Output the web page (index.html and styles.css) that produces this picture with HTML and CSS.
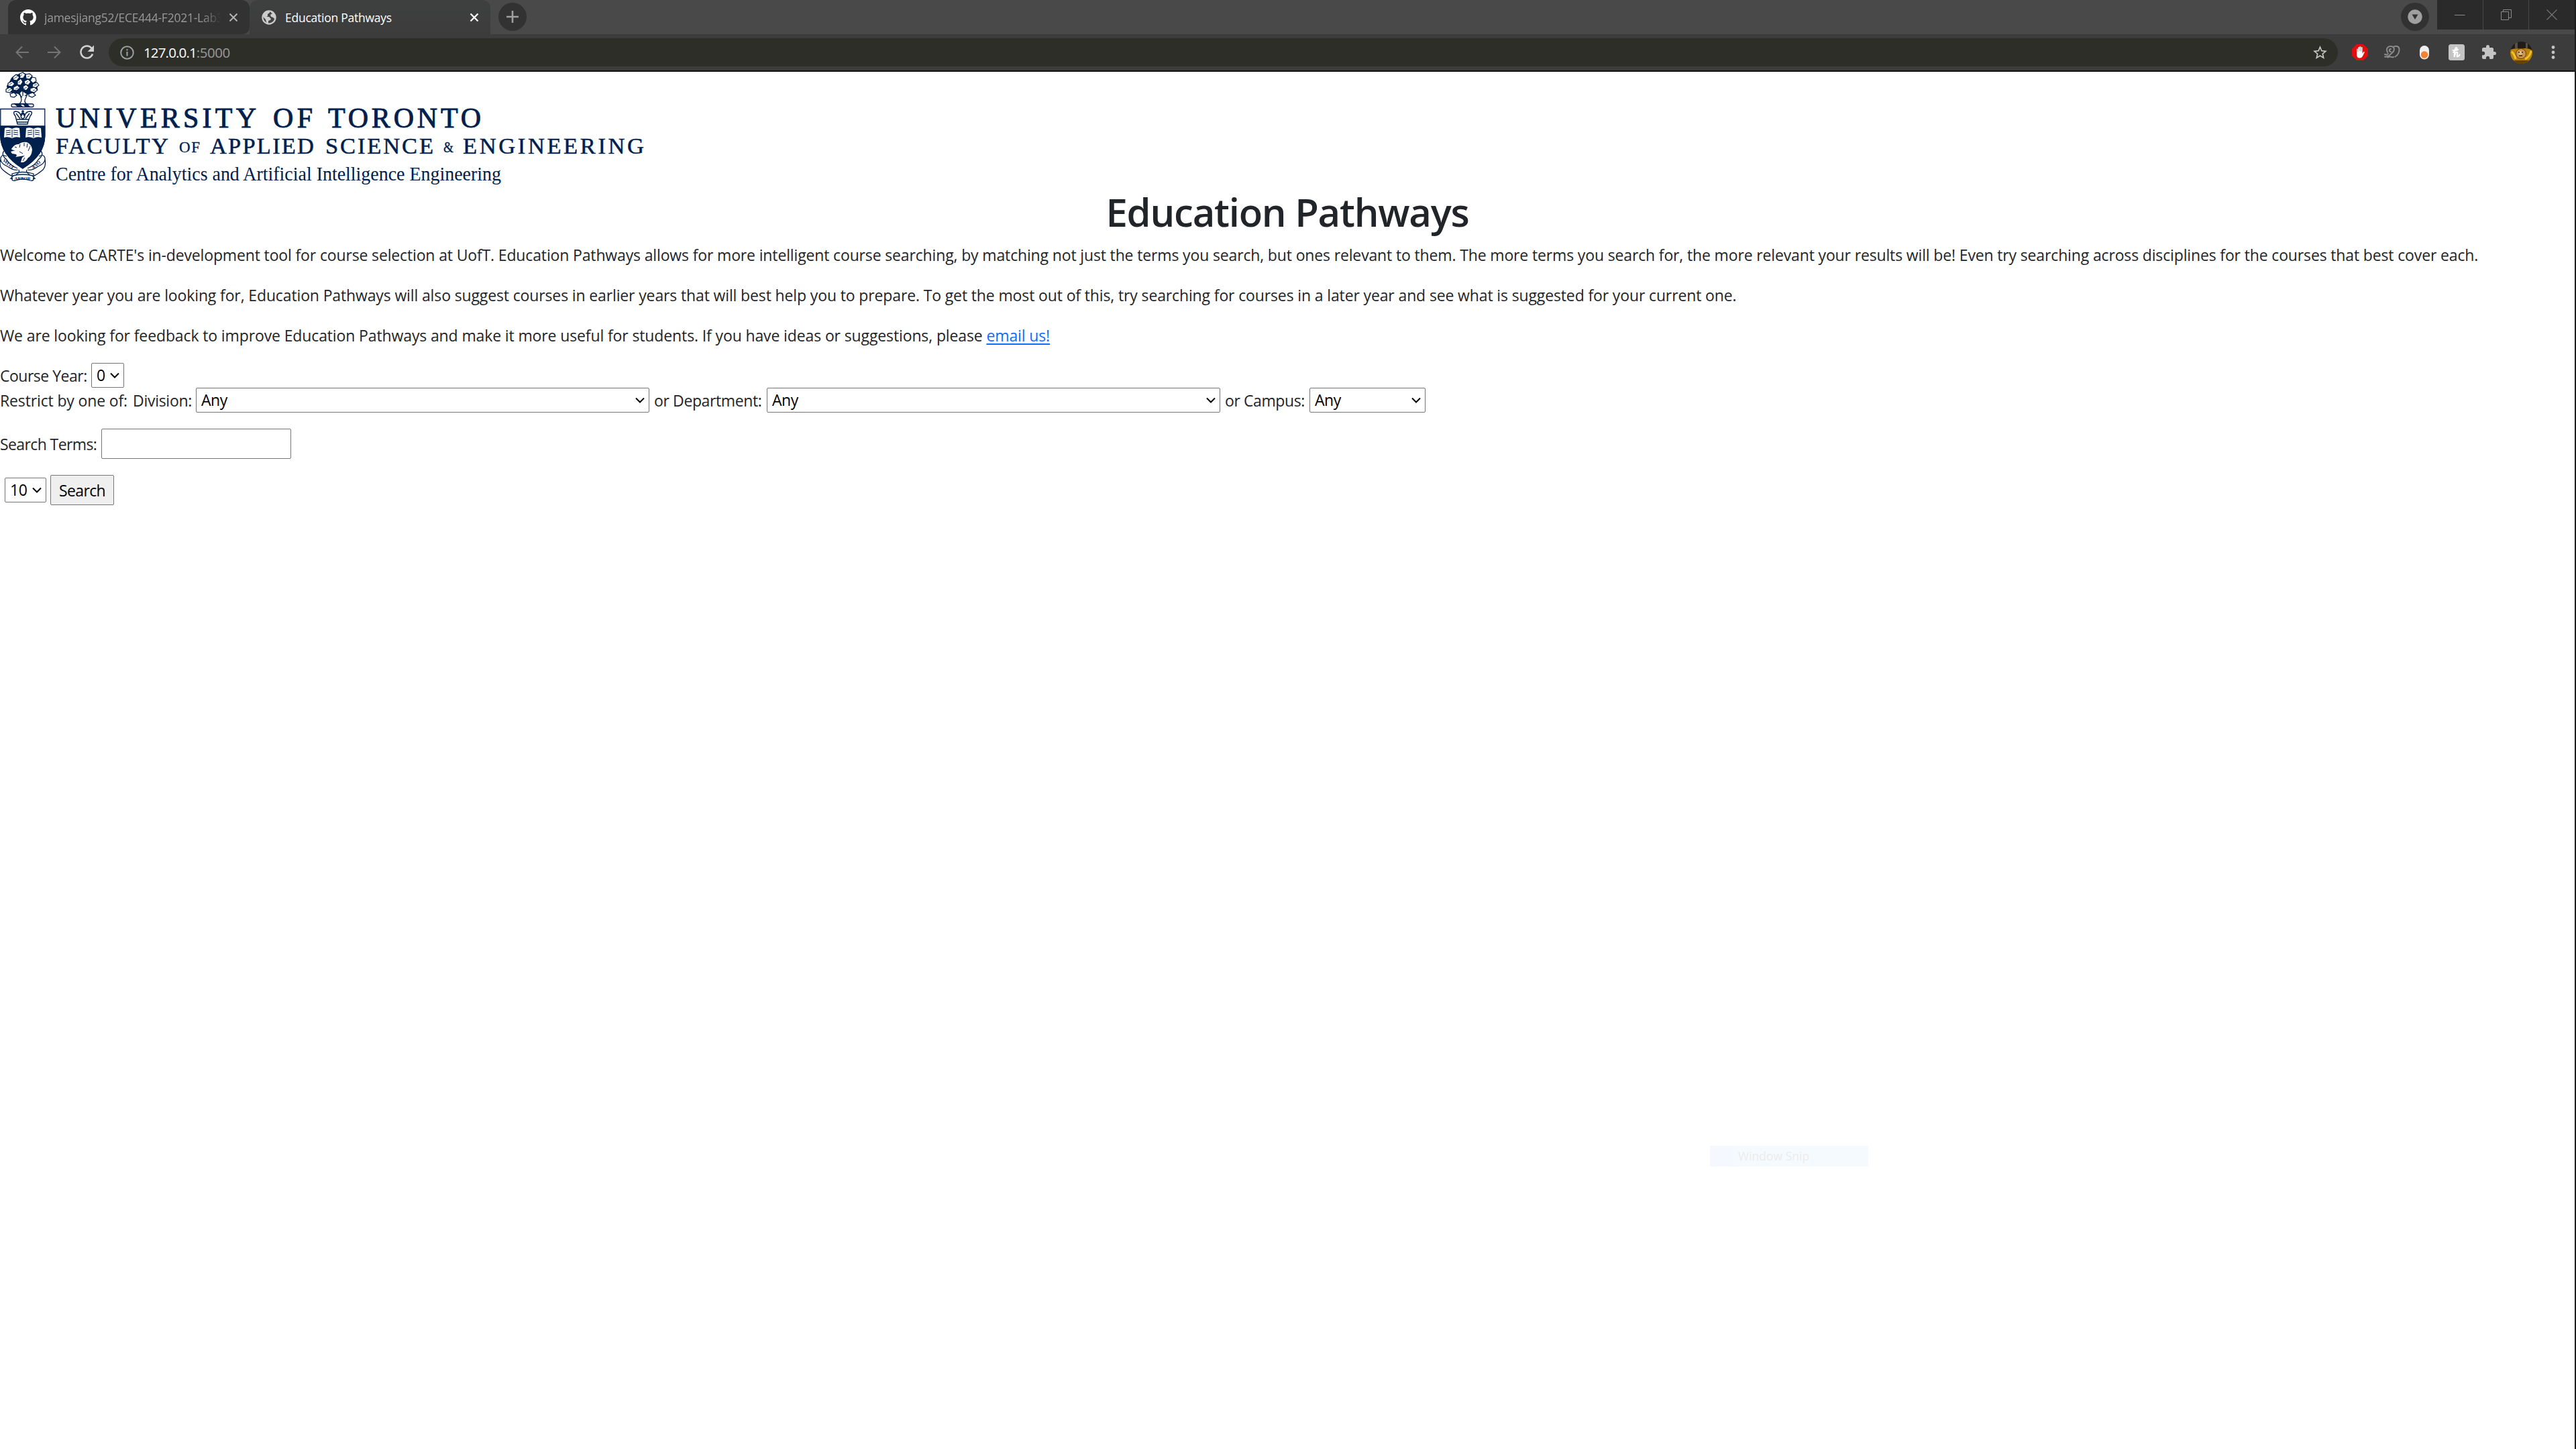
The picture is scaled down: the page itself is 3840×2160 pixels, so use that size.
FILE: index.html
```html
<!DOCTYPE html>
<html lang="en">
<head>
<meta charset="utf-8">
<title>Education Pathways</title>
<link rel="stylesheet" href="styles.css">
</head>
<body>
<div class="window">
  <header class="tabstrip">
    <div class="tab tab-idle">
      <svg class="ic-github" viewBox="0 0 16 16"><path fill="#fff" d="M8 0C3.58 0 0 3.58 0 8c0 3.54 2.29 6.53 5.47 7.59.4.07.55-.17.55-.38 0-.19-.01-.82-.01-1.49-2.01.37-2.53-.49-2.69-.94-.09-.23-.48-.94-.82-1.13-.28-.15-.68-.52-.01-.53.63-.01 1.08.58 1.23.82.72 1.21 1.87.87 2.33.66.07-.52.28-.87.51-1.07-1.78-.2-3.64-.89-3.64-3.95 0-.87.31-1.59.82-2.15-.08-.2-.36-1.02.08-2.12 0 0 .67-.21 2.2.82.64-.18 1.32-.27 2-.27s1.36.09 2 .27c1.53-1.04 2.2-.82 2.2-.82.44 1.1.16 1.92.08 2.12.51.56.82 1.27.82 2.15 0 3.07-1.87 3.75-3.65 3.95.29.25.54.73.54 1.48 0 1.07-.01 1.93-.01 2.2 0 .21.15.46.55.38A8.01 8.01 0 0 0 16 8c0-4.42-3.58-8-8-8z"/></svg>
      <span class="tab-title idle-title">jamesjiang52/ECE444-F2021-Lab3</span>
      <svg class="ic-close" viewBox="0 0 14 14"><path d="M1.5 1.5l11 11M12.5 1.5l-11 11" stroke="#b4b4b4" stroke-width="2"/></svg>
    </div>
    <div class="tab tab-active">
      <svg class="ic-globe" viewBox="0 0 22 22"><circle cx="11" cy="11" r="9.6" fill="#444" stroke="#ccc" stroke-width="2.2"/><path fill="#ccc" d="M2 9L4 4l5-3h3v3l-3 2v3l-2 1h4l3 3-1 2-3 1v4h-1L7 18l-1-4-3-3zM13 1l4 2 4 5v4l-2 1-2-2-3-1-1-3 3-2-2-1z"/></svg>
      <span class="tab-title active-title">Education Pathways</span>
      <svg class="ic-close" viewBox="0 0 14 14"><path d="M1.5 1.5l11 11M12.5 1.5l-11 11" stroke="#fff" stroke-width="2.3"/></svg>
    </div>
    <div class="round-btn newtab"><svg width="18" height="18" viewBox="0 0 18 18"><path d="M9 0v18M0 9h18" stroke="#a0a0a0" stroke-width="2.6"/></svg></div>
    <div class="spacer"></div>
    <div class="round-btn tabsearch"><svg width="22" height="22" viewBox="0 0 22 22"><circle cx="11" cy="11" r="10.7" fill="#a0a0a0"/><path d="M6.5 7.5h9L11 15z" fill="#323232"/></svg></div>
    <div class="winbtns">
      <div class="winbtn"><svg width="16" height="16" viewBox="0 0 16 16"><path d="M0 8.5h15.5" stroke="#8a8a8a"/></svg></div>
      <div class="winbtn"><svg width="16" height="16" viewBox="0 0 16 16"><path d="M.5 3.5h11v12H.5zM3.5 3V.5h12v12H12" fill="none" stroke="#8a8a8a"/></svg></div>
      <div class="winbtn"><svg width="16" height="16" viewBox="0 0 16 16"><path d="M.5.5l15 15M15.5.5l-15 15" stroke="#777" stroke-width="1.1"/></svg></div>
    </div>
  </header>

  <nav class="toolbar">
    <svg class="nav-ic" viewBox="0 0 20 20"><path d="M20 10H2M10 1.5L1.5 10l8.500 8.500" fill="none" stroke="#747474" stroke-width="2"/></svg>
    <svg class="nav-ic" viewBox="0 0 20 20"><path d="M0 10h18M10 1.500L18.500 10 10 18.500" fill="none" stroke="#747474" stroke-width="2"/></svg>
    <svg class="nav-ic reload" viewBox="0 0 22 22"><path d="M17.600 5A9 9 0 1 0 19 13.500" fill="none" stroke="#d0d0d0" stroke-width="2.500"/><path d="M21 .5v9.500h-9.500z" fill="#d0d0d0"/></svg>
    <div class="omnibox">
      <svg class="ic-info" viewBox="0 0 21 21"><circle cx="10.500" cy="10.500" r="9.300" fill="none" stroke="#9aa0a6" stroke-width="2"/><path d="M10.500 9v6.500M10.500 5.300v2.200" stroke="#9aa0a6" stroke-width="2.100"/></svg>
      <span class="url"><span class="host">127.0.0.1</span><span class="port">:5000</span></span>
      <svg class="ic-star" viewBox="0 0 24 24"><path fill="#c8c8c8" d="M22 9.240l-7.190-.62L12 2 9.190 8.630 2 9.240l5.460 4.730L5.820 21 12 17.270 18.180 21l-1.630-7.030L22 9.240zM12 15.400l-3.760 2.270 1-4.280-3.320-2.880 4.380-.38L12 6.100l1.710 4.040 4.380.38-3.320 2.880 1 4.280L12 15.400z"/></svg>
    </div>
    <div class="extensions">
      <svg viewBox="0 0 24 24"><path d="M7 0h10l7 7v10l-7 7H7l-7-7V7z" fill="#e40d0d"/><path d="M7 12V7.200q.9-1.200 1.700 0V11h.5V4.600q.9-1.200 1.800 0V10.500h.4V3.600q1-1.200 1.900 0v6.900h.5V4.700q.9-1.200 1.700 0v9l1.800-2.600q1.300-.6 1.700.5L16.300 17q-1.500 3.500-4.600 3.500Q7 20.500 7 15z" fill="#fff"/></svg>
      <svg viewBox="0 0 24 24" fill="none" stroke="#8b8b8b" stroke-width="2" stroke-linecap="round"><path d="M5 12C2 6 6 2.500 10 3c5 0 6 5 3.500 8C11 14 7 16 5 20c4-4 6 .5 9-1M1 15q3 1.500 5-1M1 18.500q2 1 4-1M13.500 4.500c3-3 9-2 9 3.500 0 5-2 8-6 10.500M10 7c-3 0-3 4 0 4"/></svg>
      <svg viewBox="0 0 24 24"><rect x="5" y="2" width="14" height="20.500" rx="7" fill="#efefef"/><circle cx="12" cy="15.500" r="5.200" fill="#f58233"/></svg>
      <svg viewBox="0 0 24 24"><rect width="24" height="24" rx="3.500" fill="#c4c4c4"/><path d="M7 12C12 9 14 5 11 5c-2 0-2 8-2.500 14 1-5 3-8 4.500-7 1.500 1-2 7 .5 6.500 1.500-.3 2.500-2 3-3M6.500 9q3 1 7.500-1" fill="none" stroke="#fff" stroke-width="2" stroke-linecap="round"/></svg>
      <svg viewBox="0 0 24 24"><path fill="#c4c4c4" d="M20.500 11H19V7c0-1.100-.9-2-2-2h-4V3.500a2.500 2.500 0 0 0-5 0V5H4c-1.100 0-2 .9-2 2v3.800h1.500a2.700 2.700 0 0 1 0 5.400H2V20c0 1.100.9 2 2 2h3.800v-1.500a2.700 2.700 0 0 1 5.400 0V22H17c1.100 0 2-.9 2-2v-4h1.500a2.500 2.500 0 0 0 0-5z"/></svg>
      <svg class="avatar" viewBox="0 0 33 33"><defs><clipPath id="av"><circle cx="16.500" cy="16.500" r="16.500"/></clipPath></defs><g clip-path="url(#av)"><path fill="#201d19" d="M0 0h33v33H0z"/><path fill="#55524a" d="M7 0h4v10H7zM23 2h3v8h-3z"/><path fill="#b98209" d="M0 12q8-3 16-1 9-3 17 2v20H0z"/><path d="M2 15q4 3 6 11M31 14q-2 9-9 12" fill="none" stroke="#edc32d" stroke-width="3"/><path fill="#654008" d="M5 28h23l-6 5H11z"/><circle cx="16" cy="18" r="7.500" fill="#c99450" stroke="#70430d"/><circle cx="15" cy="17" r="3" fill="#e3bd80"/><path d="M12 16h2M17 16h2M13 21h5" stroke="#432408" stroke-width="1.500"/></g></svg>
      <svg viewBox="0 0 24 24" fill="#c4c4c4"><circle cx="12" cy="4.500" r="2.400"/><circle cx="12" cy="12" r="2.400"/><circle cx="12" cy="19.500" r="2.400"/></svg>
    </div>
  </nav>

  <main class="page">
    <svg class="logo" viewBox="0 0 970 174" width="970" height="174">
      <g fill="none" stroke="#00204e" stroke-width="1.300">
        <path d="M28 27l4 14q0 5-4 7h12q-5-3-2-8l6-14M33 38l-9-9M34 36V20M37 36l12-8"/>
        <path d="M17 9l8-5 9-2 10 2 7 6 4 8 1 8-5 6-10 2-8-5-5 4-10-1-7-4-1-7 4-6z" fill="#00204e" stroke="none"/>
        <g fill="#fff" stroke-width="1.200">
          <path d="M29 3l5-2 4 3-3 5-5 1zM38 4l6-1 4 3-4 5-5-1zM19 8l5-4 5 4-4 5-5-1zM48 8l5 1 1 5-5 3-4-4zM12 17l6-3 4 4-4 4-6-1zM26 14l5-4 3 5-3 5-5-1zM36 14l6-3 4 4-4 5-5-2zM49 18l6-2 3 4-5 4-5-2zM9 26l6-3 4 4-4 4-6-1zM20 23l6-3 4 4-5 4-5-1zM34 22l5-3 4 4-4 5-4-2zM45 25l6-2 5 4-5 4-6-2zM15 33l6-2 4 4-4 3-5-1zM43 33l6-2 4 4-5 3-5-2z"/>
        </g>
        <path d="M21 10l5-3M30 7l3-3M41 8l3-2M28 17l2-3M39 17l3-3M14 19l4-2M12 28l4-2M23 26l4-2M36 25l4-2M49 28l3-1M51 20l4-1" stroke-width=".8"/>
        <rect x="17" y="48" width="33" height="4.500" rx="2"/>
        <path d="M22 48l5 4h6l-4-4zM35 48l3 4h6l-4-4z" fill="#00204e"/>
        <path d="M1 131q-3 9 3 15 8 7 15 10l-3 3h3M67 131q2 9-3 15-8 7-15 10l3 3h-3M10 126q-8-4-9 3t10 12q10 7 16 5M58 126q8-4 9 3t-10 12q-10 7-16 5M6 118q-5 6 4 13 4 8 16 13M61 118q5 6-4 13-4 8-16 13M18 152q15-5 32 0v9q-2 2-5 1-11-4-22 0-4 1-5-1zM19 155q15-4 30 0M28 146q2 4-4 7M40 146q-2 4 4 7" fill="#fff"/>
        <path d="M.8 55.500h66V95c0 22-15 38-33 49C16 133 .8 117 .8 95z" fill="#fff"/>
        <path d="M.8 81h66V95c0 22-15 38-33 49C16 133 .8 117 .8 95z" fill="#00204e"/>
        <path d="M23 66q-5-6 0-7 6 0 8 6 1-4 3-4t3 4q2-6 8-6 5 1 0 7l-3 8-1 4H26l-1-4zM25 71h18M26 75h16M34 57v5M32 59h4M24 62l6 8M44 62l-6 8M31 67l3-5 3 5-3 4z" stroke-width="1.400"/>
      </g>
      <g fill="#fff"><path d="M7 84q6-2 11 1 5-3 11-1l1 14q-7-2-12 1-6-3-12-1zM39 84q6-2 11 1 5-3 11-1l1 14q-7-2-12 1-6-3-12-1z"/><path d="M17 115q5-8 11-7 5-4 12-3 7 3 8 11-1 10-6 12-4 8-11 7l2-7 4-3-7 1-7 1q3-2 1-4l-6-1-2-3 7-2q-5 0-6-2z"/></g>
      <g fill="none" stroke="#00204e" stroke-width="1"><path d="M18 86v12M9 88l7-1M9 91l7-1M9 94l7-1M20 87l7 1M20 90l7 1M20 93l7 1M50 86v12M41 88l7-1M41 91l7-1M41 94l7-1M52 87l7 1M52 90l7 1M52 93l7 1M22 112l3 1M30 108l-1 5M36 106v5M41 107l-1 6M45 111l-3 7M29 119l5 3M37 128l-3 5"/></g>
      <g class="motto"><text x="21.500" y="160.500" textLength="24" lengthAdjust="spacingAndGlyphs">ARBOR</text><text transform="translate(3.500 133) rotate(38)" textLength="20">VELUT</text><text transform="translate(49 146) rotate(-40)" textLength="16">ÆVO</text></g>
      <g class="logo-text">
        <text class="l1" x="83" y="83" textLength="299">UNIVERSITY</text><text class="l1" x="407" y="83" textLength="59">OF</text><text class="l1" x="489" y="83" textLength="228">TORONTO</text>
        <text class="l2" x="83" y="122.300" textLength="168">FACULTY</text><text class="l3" x="267" y="120" textLength="31">OF</text><text class="l2" x="313" y="122.300" textLength="155">APPLIED</text><text class="l2" x="485" y="122.300" textLength="161">SCIENCE</text><text class="l3" x="661" y="120" textLength="15" lengthAdjust="spacingAndGlyphs">&amp;</text><text class="l2" x="690" y="122.300" textLength="270">ENGINEERING</text>
        <text class="l4" x="83" y="162" textLength="664" lengthAdjust="spacingAndGlyphs">Centre for Analytics and Artificial Intelligence Engineering</text>
      </g>
    </svg>
    <h1 class="title"><span>Education Pathways</span></h1>
    <p class="copy c1">Welcome to CARTE's in-development tool for course selection at UofT. Education Pathways allows for more intelligent course searching, by matching not just the terms you search, but ones relevant to them. The more terms you search for, the more relevant your results will be! Even try searching across disciplines for the courses that best cover each.</p>
    <p class="copy c2">Whatever year you are looking for, Education Pathways will also suggest courses in earlier years that will best help you to prepare. To get the most out of this, try searching for courses in a later year and see what is suggested for your current one.</p>
    <p class="copy c3">We are looking for feedback to improve Education Pathways and make it more useful for students. If you have ideas or suggestions, please <a class="mail" href="#">email us!</a></p>
    <form class="form">
      <div class="row">
        <label class="w-year">Course Year:</label>
        <div class="pick p-year"><select><option>0</option></select><svg viewBox="0 0 14 9"><path d="M1 1.500l6 6 6-6"/></svg></div>
      </div>
      <div class="row row-filter">
        <label class="w-restrict">Restrict by one of:</label>
        <label class="w-div">Division:</label>
        <div class="pick p-wide"><select><option>Any</option></select><svg viewBox="0 0 14 9"><path d="M1 1.500l6 6 6-6"/></svg></div>
        <label class="w-dep">or Department:</label>
        <div class="pick p-wide p-dep"><select><option>Any</option></select><svg viewBox="0 0 14 9"><path d="M1 1.500l6 6 6-6"/></svg></div>
        <label class="w-campus">or Campus:</label>
        <div class="pick p-campus"><select><option>Any</option></select><svg viewBox="0 0 14 9"><path d="M1 1.500l6 6 6-6"/></svg></div>
      </div>
      <div class="row row-terms">
        <label class="w-terms">Search Terms:</label>
        <input class="terms" type="text">
      </div>
      <div class="row row-go">
        <div class="pick p-count"><select><option>10</option></select><svg viewBox="0 0 14 9"><path d="M1 1.500l6 6 6-6"/></svg></div>
        <button class="go" type="button">Search</button>
      </div>
    </form>
  </main>
  <div class="snip">Window Snip</div>
</div>
</body>
</html>
```
FILE: styles.css
```css
* { box-sizing: border-box; }
body { margin: 0; background: #fff; font-family: "Open Sans", "Noto Sans", sans-serif; color: #212529; }
svg { display: block; flex: none; }
.window { position: relative; width: 3840px; height: 2160px; overflow: hidden; border-right: 2px solid #1c1c1c; }
.tabstrip { display: flex; height: 51px; background: #494949; padding-left: 12px; }
.tab { display: flex; align-items: center; height: 51px; width: 360px; border-radius: 12px 12px 0 0; font-size: 17.5px; }
.tab-idle { background: #323232; color: #999; padding-left: 18px; border-radius: 12px 12px 10px 0; }
.tab-active { background: linear-gradient(#3e403f, #3c3c3c); color: #fff; width: 359px; padding-left: 18px; }
.ic-github { width: 24px; height: 24px; }
.ic-globe { width: 22px; height: 22px; }
.tab-title { white-space: nowrap; overflow: hidden; line-height: 30px; letter-spacing: -.25px; }
.idle-title { width: 264px; margin-left: 12px; -webkit-mask-image: linear-gradient(90deg, #000 235px, transparent 264px); mask-image: linear-gradient(90deg, #000 235px, transparent 264px); }
.active-title { margin-left: 13px; width: 274px; }
.ic-close { width: 14px; height: 14px; margin-left: 11px; }
.tab-active .ic-close { margin-left: 1px; }
.round-btn { display: flex; align-items: center; justify-content: center; width: 42px; height: 42px; margin-top: 4px; border-radius: 50%; background: #323232; }
.newtab { margin-left: 12px; }
.spacer { flex: 1; }
.tabsearch { margin-right: 12px; }
.winbtns { display: flex; gap: 1px; width: 205px; height: 44px; }
.winbtn { flex: 1; display: flex; align-items: center; justify-content: center; background: #2a2a2a; }
.toolbar { display: flex; align-items: center; height: 56px; background: #3c3c3c; border-bottom: 2px solid #111214; padding-left: 23px; }
.nav-ic { width: 20px; height: 20px; margin-right: 28px; }
.reload { width: 22px; height: 22px; margin-right: 21px; }
.omnibox { display: flex; align-items: center; width: 3323px; height: 42px; border-radius: 21px; background: #2e2e29; padding: 0 14px 0 17px; }
.ic-info { width: 21px; height: 21px; }
.url { flex: 1; margin-left: 14px; font-size: 20.5px; line-height: 30px; color: #999; }
.host { color: #fff; letter-spacing: -.85px; }
.port { letter-spacing: -.45px; }
.ic-star { width: 25px; height: 25px; }
.extensions { display: flex; align-items: center; gap: 24px; margin-left: 21px; }
.extensions svg { width: 24px; height: 24px; }
.extensions .avatar { width: 33px; height: 33px; margin: 0 -4.5px; }
.page { height: 2053px; }
.logo-text text { font-family: "Liberation Serif", serif; fill: #00204e; stroke: #00204e; stroke-width: .9; }
.logo-text .l1 { font-size: 42px; }
.logo-text .l2 { font-size: 34.5px; stroke-width: .5; }
.logo-text .l3 { font-size: 23px; stroke-width: .3; }
.logo-text .l4 { font-size: 30px; stroke-width: 0; }
.motto text { font: bold 7px "Liberation Serif", serif; fill: #00204e; }
.title { margin: 0; height: 81px; text-align: center; font-size: 58px; line-height: 70px; font-weight: 600; letter-spacing: -1.25px; }
.copy { margin: 0 0 24px; font-size: 23px; line-height: 36px; white-space: nowrap; }
.c1 { letter-spacing: -.146px; }
.c2 { letter-spacing: -.133px; }
.c3 { letter-spacing: -.123px; margin-bottom: 23px; }
.mail { color: #0d6efd; text-underline-offset: 3px; text-decoration-thickness: 2px; }
.form { font-size: 23px; line-height: 36px; }
.row { display: flex; align-items: center; height: 37px; white-space: nowrap; }
.pick { display: grid; height: 37px; }
.pick select { grid-area: 1 / 1; appearance: none; margin: 0; height: 37px; border: 1px solid #767676; border-radius: 2px; background: #fff; color: #000; font: 23px/35px "Open Sans", sans-serif; letter-spacing: -.5px; padding: 0 7px; }
.pick svg { grid-area: 1 / 1; justify-self: end; align-self: center; width: 14px; height: 9px; margin-right: 7px; fill: none; stroke: #000; stroke-width: 2; }
.w-year { width: 136px; letter-spacing: -.5px; }
.p-year { width: 49px; }
.w-restrict { width: 198px; letter-spacing: -.14px; }
.w-div { width: 94px; letter-spacing: -.28px; }
.p-wide { width: 676px; }
.w-dep { width: 175px; padding-left: 7px; letter-spacing: -.38px; }
.w-campus { width: 133px; padding-left: 7px; letter-spacing: -.4px; }
.p-campus { width: 173px; }
.row-terms { height: 45px; margin-top: 24px; }
.w-terms { width: 151px; letter-spacing: -.6px; }
.terms { width: 283px; height: 45px; border: 1px solid #767676; border-radius: 2px; }
.row-go { height: 45px; margin-top: 24px; padding-left: 7px; }
.p-count { width: 62px; }
.go { margin-left: 6px; width: 95px; height: 45px; border: 1px solid #767676; border-radius: 2px; background: #efefef; color: #000; font: 23px/36px "Open Sans", sans-serif; letter-spacing: -.6px; padding: 0; }
.snip { position: absolute; left: 2549px; top: 1708px; width: 236px; height: 31px; padding-left: 42px; background: linear-gradient(90deg, #f5f8fe 36px, #f5fafe 36px); color: #ececec; font-size: 17.5px; line-height: 31px; }
```
